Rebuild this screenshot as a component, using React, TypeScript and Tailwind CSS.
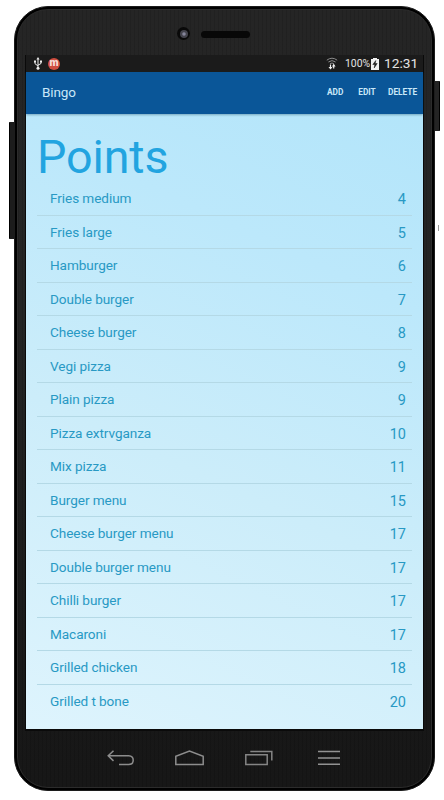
const items = [
  { name: "Fries medium", points: 4 },
  { name: "Fries large", points: 5 },
  { name: "Hamburger", points: 6 },
  { name: "Double burger", points: 7 },
  { name: "Cheese burger", points: 8 },
  { name: "Vegi pizza", points: 9 },
  { name: "Plain pizza", points: 9 },
  { name: "Pizza extrvganza", points: 10 },
  { name: "Mix pizza", points: 11 },
  { name: "Burger menu", points: 15 },
  { name: "Cheese burger menu", points: 17 },
  { name: "Double burger menu", points: 17 },
  { name: "Chilli burger", points: 17 },
  { name: "Macaroni", points: 17 },
  { name: "Grilled chicken", points: 18 },
  { name: "Grilled t bone", points: 20 },
]

function StatusBar() {
  return (
    <div className="flex h-[17px] shrink-0 items-center bg-[#1b1b1b] pl-[8px] pr-[6px] text-[#e4e4e4]">
      {/* USB */}
      <svg width="8" height="13" viewBox="0 0 8 13" fill="none" stroke="#eee" strokeWidth="1">
        <path d="M4 2v9M1 4.5v2.2l3 2.3M7 4.5v2L4 8.2" />
        <path d="M4 0L2.4 2.6h3.2z" fill="#eee" stroke="none" />
        <circle cx="4" cy="11.3" r="1.5" fill="#eee" stroke="none" />
        <path d="M0 3.5h2v2H0zM6 3.5h2v2H6z" fill="#eee" stroke="none" />
      </svg>
      <div className="ml-[6px] mt-px flex h-[12px] w-[12px] items-center justify-center rounded-full bg-[#cf4e40] text-[10.5px] font-black leading-none text-[#f6dcd8]">
        <span className="-mt-[2px]">m</span>
      </div>
      {/* Wifi with transfer arrows */}
      <svg className="ml-auto" width="12" height="13" viewBox="0 0 12 13" fill="none" stroke="#8b8b8b" strokeWidth="1">
        <path d="M.8 3.2Q6-.8 11.2 3.2M2.4 5Q6 2.2 9.6 5M4 6.8Q6 5.2 8 6.8" />
        <path d="M4.5 7.5v4M7.7 7.5v4" stroke="#f2f2f2" strokeWidth="1.2" />
        <path d="M2.5 10h4l-2 2.6zM5.9 9.5L7.7 7l1.9 2.5z" fill="#f2f2f2" stroke="none" />
      </svg>
      <span className="ml-[7px] mt-px w-[25px] whitespace-nowrap text-[10.4px] leading-none">100%</span>
      <svg className="ml-px" width="8" height="12" viewBox="0 0 8 12">
        <path d="M2 0h4v1h2v11H0V1h2z" fill="#f0f0f0" />
        <path d="M4.8 2.5L1.8 6.5h2L3.2 10l3-4.5h-2z" fill="#1b1b1b" stroke="#1b1b1b" strokeWidth=".5" />
      </svg>
      <span className="ml-[5px] w-[33px] whitespace-nowrap text-[13.7px] leading-none">12:31</span>
    </div>
  )
}

function AppBar() {
  return (
    <header className="z-10 flex h-[42px] shrink-0 items-center bg-[#0a5698] pl-[16px] pr-[6px] text-[#c9e8f8] shadow-[0_1px_2px_rgba(20,70,100,0.4)]">
      <h1 className="text-[13.5px] leading-none tracking-[-0.1px]">Bingo</h1>
      <nav className="-mt-px ml-auto flex gap-[15px] text-[8.3px] font-bold leading-none">
        <button className="w-[16px] whitespace-nowrap">ADD</button>
        <button className="w-[18px] whitespace-nowrap">EDIT</button>
        <button className="-ml-[3px] w-[29px] whitespace-nowrap">DELETE</button>
      </nav>
    </header>
  )
}

function NavButtons() {
  return (
    <div className="flex h-[58px] items-center justify-center gap-[41px] pr-[3px]">
      <svg width="27" height="16" viewBox="0 0 27 16" fill="none" stroke="#8d8d8d" strokeWidth="1.5">
        <path d="M6.5.7L1.2 5.8l5.3 5.1M1.2 5.8h20.5q4.5.2 4.5 4.4t-4.5 4.4H12" />
      </svg>
      <svg width="29" height="16" viewBox="0 0 29 16" fill="none" stroke="#8d8d8d" strokeWidth="1.5">
        <path d="M.8 14.6V6.2L14.5 1l13.7 5.2v8.4z" />
      </svg>
      <svg width="28" height="16" viewBox="0 0 28 16" fill="none" stroke="#858585" strokeWidth="1.5">
        <path d="M.8 4.8h21.4v9.6H.8zM5.3 1.5h21.5v9" />
      </svg>
      <svg className="ml-[4px]" width="22" height="16" viewBox="0 0 22 16" stroke="#929292" strokeWidth="1.5">
        <path d="M0 1.5h22M0 8h22M0 14.3h22" />
      </svg>
    </div>
  )
}

export default function App() {
  return (
    <div className="flex h-[800px] w-[444px] overflow-hidden bg-white pt-[6px] font-[Roboto,sans-serif]">
      {/* Volume keys */}
      <div className="flex w-[14px] justify-end pt-[116px]">
        <div className="h-[117px] w-[5px] rounded-l-[1px] border-l border-black bg-[#1c1c1c]" />
      </div>

      <div className="flex h-[785px] w-[421px] flex-col rounded-[34px] border border-[#1c1c1c] bg-black p-[2px]">
        <div className="flex flex-1 flex-col rounded-[31px] border border-[#2c2c2c] bg-[repeating-linear-gradient(90deg,rgba(0,0,0,0.12)_0_1px,transparent_1px_4px),linear-gradient(#252525,#242424_40%,#181818_88%,#171717)] px-[8px]">
          <div className="flex h-[45px] shrink-0 items-start gap-[11px] pl-[151px] pt-[17px]">
            <div className="flex h-[13px] w-[13px] items-center justify-center rounded-full bg-[#090909]">
              <div className="h-[8px] w-[8px] rounded-full bg-[radial-gradient(#85859a_0_20%,#43434c_40%_65%,#24242a)]" />
            </div>
            <div className="mt-[4px] h-[7px] w-[49px] rounded-full bg-[#080808]" />
          </div>

          <div className="flex h-[674px] w-[397px] shrink-0 flex-col shadow-[0_1px_0_1px_#0a0a0a]">
            <StatusBar />
            <AppBar />
            <main className="flex flex-1 flex-col bg-[linear-gradient(205deg,#b3e5fa,#bce8fb_25%,#ccedfa_58%,#def4fd)] px-[11px]">
              <h2 className="h-[68px] pt-[19px] text-[46.6px] leading-[48px] tracking-[-0.1px] text-[#22a4e0]">Points</h2>
              <ul>
                {items.map((item) => (
                  <li
                    key={item.name}
                    className="flex h-[33.53px] items-start justify-between border-b border-[#b4d9e6] pl-[13px] pr-[6px] text-[#2899c4] last:border-b-0"
                  >
                    <span className="pt-[8px] text-[13.6px] leading-[16px] tracking-[-0.08px]">{item.name}</span>
                    <span className="pt-[9px] text-[14.5px] leading-[17px]">{item.points}</span>
                  </li>
                ))}
              </ul>
            </main>
          </div>

          <NavButtons />
        </div>
      </div>

      {/* Power key */}
      <div className="pt-[75px]">
        <div className="h-[50px] w-[5px] rounded-r-[1px] border-r border-black bg-[#242424]" />
        <div className="ml-[3px] mt-[94px] h-[6px] w-px bg-[#999]" />
      </div>
    </div>
  )
}
